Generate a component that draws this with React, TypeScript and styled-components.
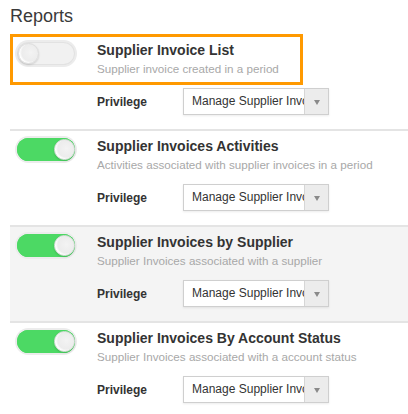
import styled, { createGlobalStyle } from 'styled-components';

const GlobalStyle = createGlobalStyle`
  body {
    margin: 0;
    background: #fff;
    font-family: 'Liberation Sans', Arial, sans-serif;
    color: #333;
  }
`;

const Page = styled.div`
  padding-left: 10px;
  width: 398px;
`;

const Heading = styled.h2`
  margin: 6px 0 9px;
  font-size: 18px;
  line-height: 20px;
  font-weight: normal;
  color: #3a3a3a;
`;

const Section = styled.section<{ $shaded?: boolean; $first?: boolean }>`
  padding: 2px 0 14px;
  border-top: ${(p) => (p.$first ? 'none' : '2px solid #e4e4e4')};
  background: ${(p) => (p.$shaded ? '#f4f4f4' : '#fff')};
`;

const Header = styled.div<{ $highlight?: boolean }>`
  display: flex;
  margin-left: 3px;
  width: 287px;
  height: 45px;
  outline: ${(p) => (p.$highlight ? '3px solid #ff9900' : 'none')};
`;

const ToggleCol = styled.div`
  width: 84px;
  flex-shrink: 0;
  padding: 5px 0 0 4px;
  box-sizing: border-box;
`;

const Toggle = styled.div<{ $on?: boolean }>`
  position: relative;
  width: 58px;
  height: 23px;
  border-radius: 12px;
  background: ${(p) => (p.$on ? '#4cd964' : '#f1f1f1')};
  box-shadow: 0 0 0 2px #ececec, inset 0 0 0 1px ${(p) => (p.$on ? '#4cd964' : '#e2e2e2')};
`;

const Knob = styled.div<{ $on?: boolean }>`
  position: absolute;
  top: 1px;
  left: ${(p) => (p.$on ? '37px' : '1px')};
  width: 21px;
  height: 21px;
  border-radius: 50%;
  box-sizing: border-box;
  background: radial-gradient(circle at 60% 45%, #f3f3f3 0%, #ececec 55%, #fff 70%);
  border: 1px solid #dcdcdc;
  box-shadow: 0 1px 2px rgba(0, 0, 0, 0.15);
`;

const Titles = styled.div`
  padding-top: 5px;
  white-space: nowrap;
`;

const Title = styled.div`
  font-size: 14px;
  line-height: 17px;
  font-weight: bold;
  color: #333;
`;

const Subtitle = styled.div`
  margin-top: 2px;
  font-size: 11.65px;
  line-height: 15px;
  color: #a8a8a8;
`;

const PrivRow = styled.div`
  display: flex;
  align-items: center;
  margin: 6px 0 0 87px;
`;

const PrivLabel = styled.div`
  width: 86px;
  font-size: 12px;
  font-weight: bold;
  color: #333;
`;

const Select = styled.div`
  display: flex;
  width: 146px;
  height: 27px;
  box-sizing: border-box;
  border: 1px solid #cfcfcf;
  background: #fff;
  box-shadow: 0 1px 2px rgba(0, 0, 0, 0.08);
`;

const SelectText = styled.div`
  flex: 1;
  overflow: hidden;
  white-space: nowrap;
  padding-left: 8px;
  font-size: 12px;
  line-height: 25px;
  color: #333;
`;

const Arrow = styled.div`
  width: 23px;
  flex-shrink: 0;
  background: #ececec;
  border-left: 1px solid #d6d6d6;
  display: flex;
  align-items: center;
  justify-content: center;

  &::after {
    content: '';
    border-left: 3.5px solid transparent;
    border-right: 3.5px solid transparent;
    border-top: 5px solid #8a8a8a;
    margin-top: 1px;
  }
`;

const reports = [
  { title: 'Supplier Invoice List', desc: 'Supplier invoice created in a period', on: false },
  { title: 'Supplier Invoices Activities', desc: 'Activities associated with supplier invoices in a period', on: true },
  { title: 'Supplier Invoices by Supplier', desc: 'Supplier Invoices associated with a supplier', on: true },
  { title: 'Supplier Invoices By Account Status', desc: 'Supplier Invoices associated with a account status', on: true },
];

export default function App() {
  return (
    <Page>
      <GlobalStyle />
      <Heading>Reports</Heading>
      {reports.map((r, i) => (
        <Section key={r.title} $first={i === 0} $shaded={i === 2}>
          <Header $highlight={i === 0}>
            <ToggleCol>
              <Toggle $on={r.on}>
                <Knob $on={r.on} />
              </Toggle>
            </ToggleCol>
            <Titles>
              <Title>{r.title}</Title>
              <Subtitle>{r.desc}</Subtitle>
            </Titles>
          </Header>
          <PrivRow>
            <PrivLabel>Privilege</PrivLabel>
            <Select>
              <SelectText>Manage Supplier Invoices</SelectText>
              <Arrow />
            </Select>
          </PrivRow>
        </Section>
      ))}
    </Page>
  );
}
